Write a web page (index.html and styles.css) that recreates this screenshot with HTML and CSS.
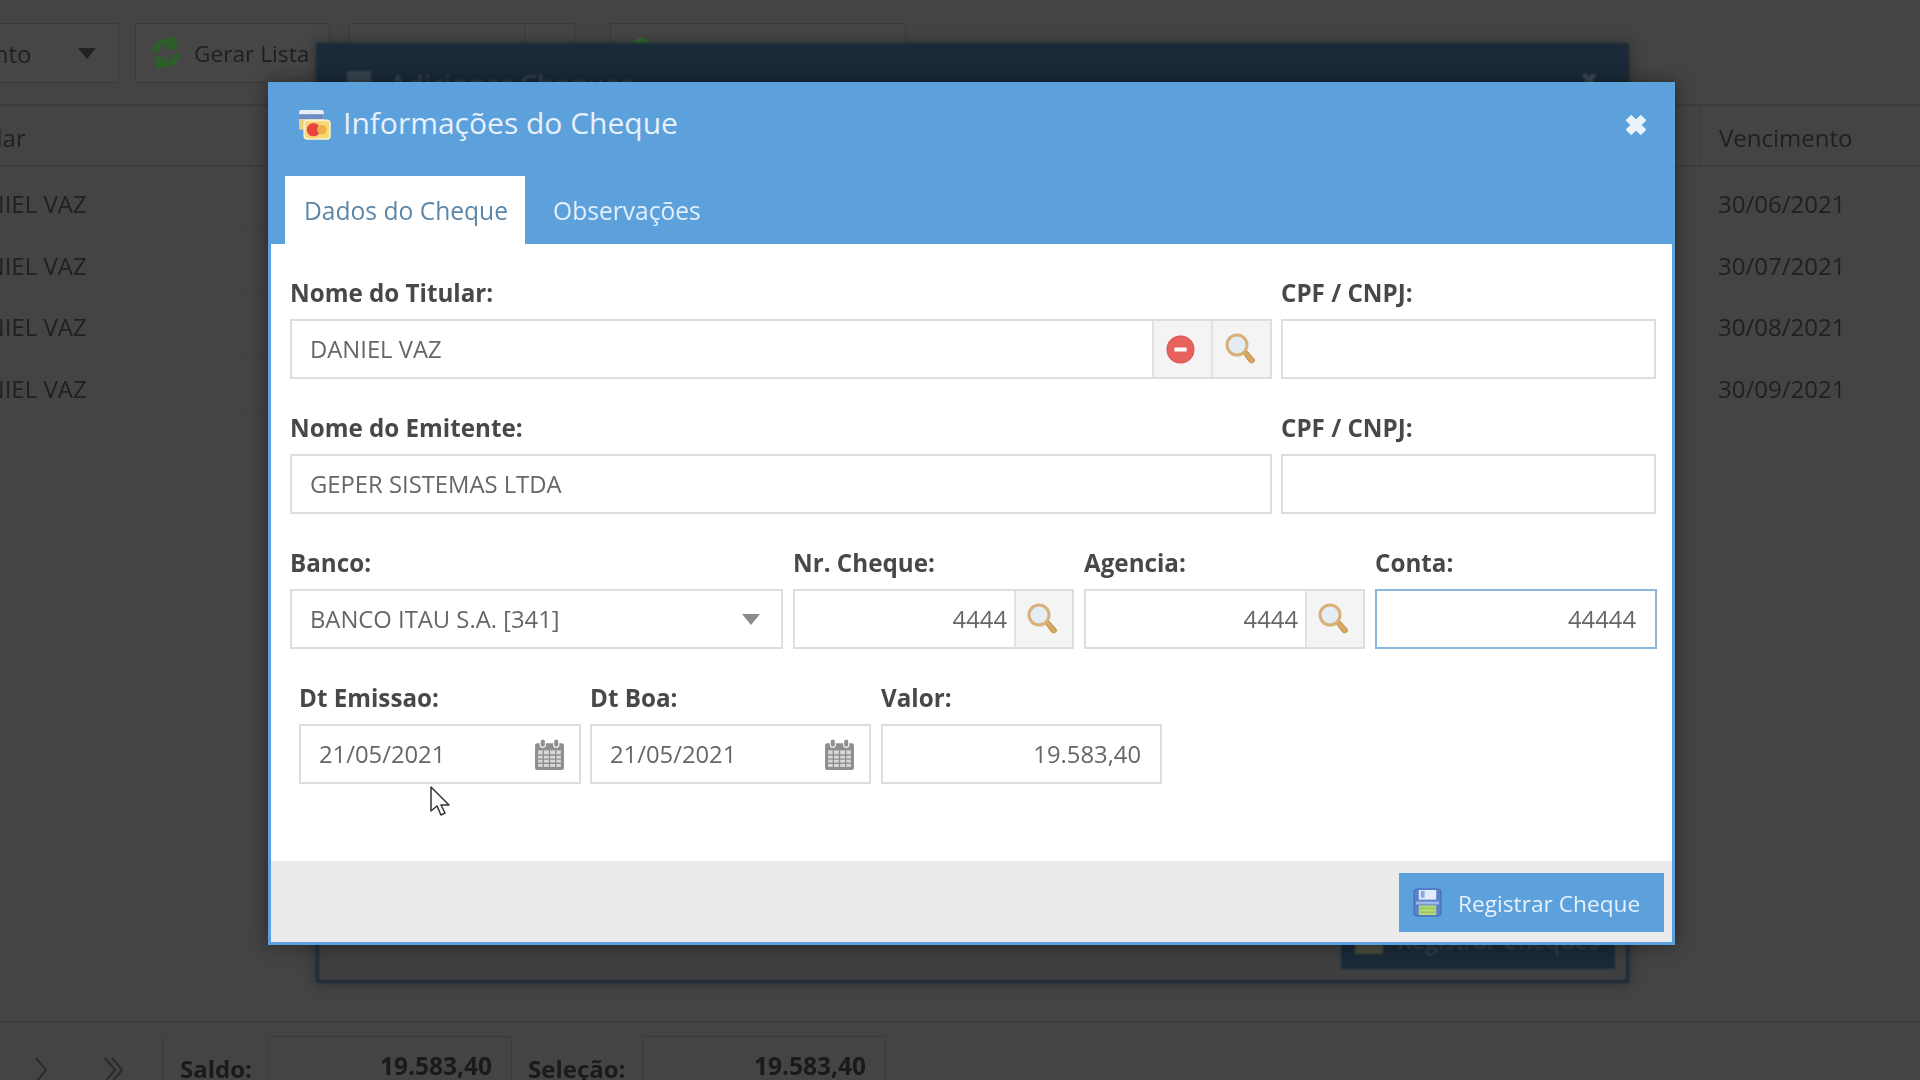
FILE: index.html
```html
<!DOCTYPE html>
<html lang="pt-BR">
<head>
<meta charset="utf-8">
<title>Informações do Cheque</title>
<link rel="stylesheet" href="styles.css">
</head>
<body>
<svg class="defs" width="0" height="0">
  <defs>
    <symbol id="lens" viewBox="0 0 32 32">
      <path d="M19 20l3-3 8 9c1 1.500 0 3-1 3.500s-2.500.5-3.500-.5z" fill="#d9a860" stroke="#b98a48" stroke-width="1"/>
      <circle cx="13" cy="12" r="10" fill="#e4edf4" stroke="#d9b077" stroke-width="3"/>
    </symbol>
    <symbol id="cal" viewBox="0 0 28 30">
      <path d="M2 4h24a2 2 0 0 1 2 2v22a2 2 0 0 1-2 2H2a2 2 0 0 1-2-2V6a2 2 0 0 1 2-2z" fill="#8f8f8f"/>
      <path d="M3 11h22v16H3z" fill="#d8d8d8"/>
      <path d="M3 15.500h22M3 19.500h22M3 23.500h22M8 11v16M14 11v16M20 11v16" stroke="#8f8f8f" stroke-width="1.300"/>
      <rect x="5" y="0" width="5" height="8" rx="2.500" fill="#8f8f8f" stroke="#fff"/>
      <rect x="18" y="0" width="5" height="8" rx="2.500" fill="#8f8f8f" stroke="#fff"/>
    </symbol>
    <symbol id="refresh" viewBox="0 0 32 32">
      <path d="M4 15C4 7 12 1 21 4l3-3 2 11-11-1 4-3C14 6 9 9 8 15zM28 17c0 8-8 14-17 11l-3 3-2-11 11 1-4 3c5 2 10-1 11-7z" fill="#2d5f2a" stroke="#2d5f2a" stroke-width="1.500"/>
    </symbol>
  </defs>
</svg>

<div class="page">
  <div class="toolbar">
    <div class="tool tool-doc"><span>Documento</span><i class="caret caret-dark"></i></div>
    <div class="tool tool-list"><svg class="tool-icon"><use href="#refresh"/></svg><span>Gerar Lista</span></div>
    <div class="tool tool-split"><span class="split"></span></div>
    <div class="tool tool-green"><i class="green-dot"></i></div>
  </div>
  <div class="grid-head">
    <div class="col-name">Titular</div>
    <div class="col-date">Vencimento</div>
  </div>
  <div class="grid-row"><div class="col-name">DANIEL VAZ</div><div class="col-date">30/06/2021</div></div>
  <div class="grid-row"><div class="col-name">DANIEL VAZ</div><div class="col-date">30/07/2021</div></div>
  <div class="grid-row"><div class="col-name">DANIEL VAZ</div><div class="col-date">30/08/2021</div></div>
  <div class="grid-row"><div class="col-name">DANIEL VAZ</div><div class="col-date">30/09/2021</div></div>
  <div class="grid-fill"></div>
  <div class="statusbar">
    <div class="pager">
      <svg class="chev" viewBox="0 0 16 28"><path d="M3 2l10 12L3 26" fill="none" stroke="#2b2b2b" stroke-width="2"/></svg>
      <svg class="chev chev2" viewBox="0 0 24 28"><path d="M3 2l10 12L3 26M10 2l10 12-10 12" fill="none" stroke="#2b2b2b" stroke-width="2"/></svg>
    </div>
    <div class="totals">
      <b class="total-label">Saldo:</b><div class="total-box">19.583,40</div>
      <b class="total-label">Seleção:</b><div class="total-box">19.583,40</div>
    </div>
  </div>
</div>

<div class="back-modal">
  <div class="back-head">
    <span class="back-icon"></span><span>Adicionar Cheques</span>
    <span class="back-close">✖</span>
  </div>
  <div class="back-foot"><div class="back-btn"><span class="back-btn-icon"></span>Registrar Cheques</div></div>
</div>

<div class="modal">
  <div class="modal-head">
    <div class="modal-title">
      <svg class="card-icon" viewBox="0 0 32 30">
        <rect x="1" y="1" width="24" height="18" rx="2" fill="#e6eef8"/>
        <rect x="1" y="5" width="24" height="5" fill="#6f8dc0"/>
        <rect x="1" y="10" width="8" height="10" fill="#e9cf7d"/>
        <rect x="6" y="11" width="25" height="18" rx="3" fill="#f6d872" stroke="#fbf1cc" stroke-width="1.500"/>
        <circle cx="15" cy="20" r="6.500" fill="#e9453f"/>
        <circle cx="23" cy="20" r="4.500" fill="#eeb04a"/>
      </svg>
      <span class="title-text">Informações do Cheque</span>
      <svg class="close-icon" viewBox="0 0 22 22"><path d="M3 7l4-4 4 4 4-4 4 4-4 4 4 4-4 4-4-4-4 4-4-4 4-4z" fill="#eaf3fb" stroke="#eaf3fb" stroke-linejoin="round"/></svg>
    </div>
    <div class="tabs">
      <div class="tab tab-active">Dados do Cheque</div>
      <div class="tab">Observações</div>
    </div>
  </div>

  <div class="modal-body">
    <div class="form-row">
      <div class="f f-name"><label>Nome do Titular:</label>
        <div class="box"><span class="val">DANIEL VAZ</span>
          <span class="addon addon-m"><svg class="minus" viewBox="0 0 28 28"><circle cx="14" cy="14" r="13" fill="#e7625c"/><circle cx="14" cy="14" r="13" fill="none" stroke="#d9534f" stroke-width="1"/><rect x="8" y="12" width="12" height="4" rx="1" fill="#fff"/></svg></span>
          <span class="addon"><svg class="lens"><use href="#lens"/></svg></span>
        </div>
      </div>
      <div class="f f-doc"><label>CPF / CNPJ:</label><div class="box"></div></div>
    </div>
    <div class="form-row">
      <div class="f f-name"><label>Nome do Emitente:</label><div class="box"><span class="val">GEPER SISTEMAS LTDA</span></div></div>
      <div class="f f-doc"><label>CPF / CNPJ:</label><div class="box"></div></div>
    </div>
    <div class="form-row">
      <div class="f f-bank"><label>Banco:</label><div class="box"><span class="val">BANCO ITAU S.A. [341]</span><i class="caret"></i></div></div>
      <div class="f f-num"><label>Nr. Cheque:</label><div class="box"><span class="val right near">4444</span><span class="addon addon-s"><svg class="lens"><use href="#lens"/></svg></span></div></div>
      <div class="f f-num"><label>Agencia:</label><div class="box"><span class="val right near">4444</span><span class="addon addon-s"><svg class="lens"><use href="#lens"/></svg></span></div></div>
      <div class="f f-conta"><label>Conta:</label><div class="box box-focus"><span class="val right">44444</span></div></div>
    </div>
    <div class="form-row form-row-in">
      <div class="f f-date"><label>Dt Emissao:</label><div class="box"><span class="val">21/05/2021</span><svg class="cal"><use href="#cal"/></svg></div></div>
      <div class="f f-date"><label>Dt Boa:</label><div class="box"><span class="val">21/05/2021</span><svg class="cal"><use href="#cal"/></svg></div></div>
      <div class="f f-date"><label>Valor:</label><div class="box"><span class="val right">19.583,40</span></div></div>
    </div>
  </div>

  <div class="modal-foot">
    <div class="save-btn">
      <svg class="save-icon" viewBox="0 0 30 30">
        <rect x="1" y="1" width="28" height="28" rx="3" fill="#5b82c9" stroke="#3f68b5"/>
        <rect x="6" y="2" width="18" height="10" fill="#e3ecf9"/>
        <rect x="8" y="3" width="4" height="7" fill="#8aa8dc"/>
        <rect x="3" y="14" width="24" height="3" fill="#9dbbe8"/>
        <rect x="6" y="18" width="18" height="10" fill="#b5d87a"/>
        <path d="M7 21h16M7 25h16" stroke="#8cb84f"/>
      </svg>
      <span>Registrar Cheque</span>
    </div>
  </div>
</div>

<svg class="cursor" viewBox="0 0 20 30"><path d="M1 1v24l6-5 4 9 4-2-4-8h8z" fill="#fff" stroke="#333" stroke-width="1.500" stroke-linejoin="round"/></svg>
</body>
</html>
```
FILE: styles.css
```css
* { box-sizing: border-box; }
html, body { margin: 0; height: 1080px; overflow: hidden; }
body { background: #444; font-family: "Open Sans", sans-serif; font-size: 23.8px; color: #555; position: relative; }
.defs { position: absolute; }

.page { height: 1080px; display: flex; flex-direction: column; background: #444; color: #1c1c1c; font-size: 24px; filter: blur(0.5px); }
.toolbar { height: 106px; flex: none; display: flex; gap: 16px; padding-top: 23px; margin-left: -101px; border-bottom: 2px solid #3c3c3c; align-items: flex-start; }
.tool { height: 60px; border: 1px solid #3a3a3a; background: #464646; display: flex; align-items: center; color: #1f1f1f; white-space: nowrap; }
.tool-doc { width: 220px; justify-content: space-between; padding-right: 22px; }
.tool-list { width: 195px; padding-left: 13px; gap: 11px; font-size: 22.700px; overflow: hidden; }
.tool-icon { width: 34px; height: 38px; flex: none; }
.tool-split { width: 226px; margin-left: 3px; position: relative; }
.split { position: absolute; left: 174px; top: 0; bottom: 0; border-left: 1px solid #3a3a3a; }
.tool-green { width: 296px; margin-left: 19px; position: relative; }
.green-dot { position: absolute; left: 20px; top: 14px; width: 20px; height: 20px; border-radius: 50%; background: #2f6b2c; }
.caret { width: 0; height: 0; border-left: 9px solid transparent; border-right: 9px solid transparent; border-top: 11px solid #8c8c8c; margin-right: 21px; flex: none; }
.caret-dark { border-top-color: #222; margin-right: 0; }

.grid-head, .grid-row { flex: none; display: flex; justify-content: space-between; align-items: center; color: #202020; margin-left: -46px; }
.grid-head { height: 61px; padding-top: 4px; border-bottom: 2px solid #3d3d3d; }
.grid-row { height: 61.500px; padding-top: 10px; border-bottom: 1px solid #414141; }
.grid-head + .grid-row { height: 63px; }
.col-date { width: 221px; padding-left: 19px; align-self: stretch; display: flex; align-items: center; }
.grid-head .col-date { border-left: 1px solid #3b3b3b; margin-top: -4px; padding-top: 4px; }
.grid-fill { flex: 1; }
.statusbar { flex: none; height: 59px; border-top: 1px solid #3a3a3a; display: flex; padding-top: 14px; overflow: hidden; color: #1a1a1a; }
.pager { width: 163px; display: flex; gap: 53px; padding: 20px 0 0 33px; align-items: flex-start; border-right: 1px solid #3a3a3a; }
.chev { width: 16px; height: 28px; }
.chev2 { width: 24px; }
.totals { display: flex; gap: 16px; padding-left: 17px; align-items: flex-start; }
.total-label { font-weight: 700; padding-top: 16px; width: 72px; }
.total-label + .total-box + .total-label { width: 98px; }
.total-box { width: 244px; height: 70px; border: 1px solid #3a3a3a; text-align: right; padding: 12px 19px 0 0; font-weight: 700; font-size: 24.500px; }

.back-modal { position: absolute; left: 316px; top: 43px; width: 1313px; height: 940px; border: 3px solid #1a2a38; background: #3f3f3f; box-shadow: 0 0 14px rgba(0,0,0,.35); display: flex; flex-direction: column; justify-content: space-between; filter: blur(0.8px); }
.back-head { height: 100px; background: #1a2a38; display: flex; align-items: flex-start; gap: 18px; padding: 19px 0 0 28px; color: #3d4a56; font-size: 28px; position: relative; }
.back-icon { width: 24px; height: 24px; background: #3a4650; margin-top: 6px; }
.back-close { position: absolute; right: 28px; top: 18px; font-size: 22px; }
.back-foot { display: flex; justify-content: flex-end; padding: 0 11px 11px 0; }
.back-btn { width: 274px; height: 59px; background: #1a2a38; display: flex; align-items: center; gap: 14px; padding-left: 14px; color: #3d4a56; }
.back-btn-icon { width: 28px; height: 28px; background: #4a4c3c; }

.modal { position: absolute; left: 268px; top: 82px; width: 1407px; height: 863px; border: 3px solid #5ca0dc; border-top: 0; background: #fff; display: flex; flex-direction: column; box-shadow: 0 0 18px rgba(0,0,0,.45); filter: blur(0.5px); }
.modal-head { height: 162px; flex: none; background: #5ca0dc; margin: 0 -3px; padding: 0 26px 0 17px; display: flex; flex-direction: column; justify-content: space-between; }
.modal-title { display: flex; align-items: center; padding-top: 15px; height: 66px; color: #e6f1fb; font-size: 30px; }
.card-icon { width: 33px; height: 31px; margin: 4px 11px 0 13px; flex: none; }
.title-text { flex: 1; padding-left: 1px; }
.close-icon { width: 26px; height: 26px; margin: 4px 0 0 0; flex: none; }
.tabs { display: flex; height: 68px; }
.tab { padding: 0 28px; display: flex; align-items: center; font-size: 24.600px; color: #e3effa; white-space: nowrap; }
.tab-active { background: #fff; color: #5b87ab; padding: 0 19px; width: 240px; }

.modal-body { flex: 1; padding: 33px 19px 0 19px; display: flex; flex-direction: column; gap: 33px; }
.form-row { display: flex; gap: 10px; }
.form-row-in { padding-left: 9px; }
.f { display: flex; flex-direction: column; gap: 10px; flex: none; }
.f label { height: 32px; line-height: 32px; font-weight: 700; font-size: 24.200px; color: #484848; }
.box { height: 60px; border: 2px solid #dedede; display: flex; align-items: center; background: #fff; color: #666; }
.box-focus { border-color: #8cb6dc; }
.val { flex: 1; padding: 0 18px; white-space: nowrap; }
.val.right { text-align: right; padding: 0 19px 0 0; }
.val.right.near { padding-right: 7px; }
.f-name { width: 982px; }
.f-doc { width: 375px; margin-left: -1px; }
.f-bank { width: 493px; }
.f-num { width: 281px; }
.f-conta { width: 282px; }
.f-date { width: 281px; }
.f-date:first-child { width: 282px; margin-right: -1px; }
.addon { width: 59px; align-self: stretch; flex: none; background: #f4f4f4; border-left: 2px solid #e2e2e2; display: flex; align-items: center; justify-content: center; }
.addon-m { width: 59px; }
.addon-s { width: 58px; }
.minus { width: 29px; height: 29px; margin-right: 4px; }
.lens { width: 32px; height: 32px; margin-right: 4px; }
.cal { width: 29px; height: 31px; margin-right: 15px; flex: none; }

.modal-foot { height: 81px; flex: none; background: #ebebeb; display: flex; justify-content: flex-end; padding: 12px 8px 0 0; }
.save-btn { width: 265px; height: 59px; background: #5ca0dc; display: flex; align-items: center; color: #e6f1fb; gap: 16px; padding-left: 14px; font-size: 22.700px; }
.save-btn span { padding-top: 2px; }
.save-icon { width: 29px; height: 29px; }
.cursor { position: absolute; left: 430px; top: 786px; width: 20px; height: 30px; filter: blur(0.4px); }
```
